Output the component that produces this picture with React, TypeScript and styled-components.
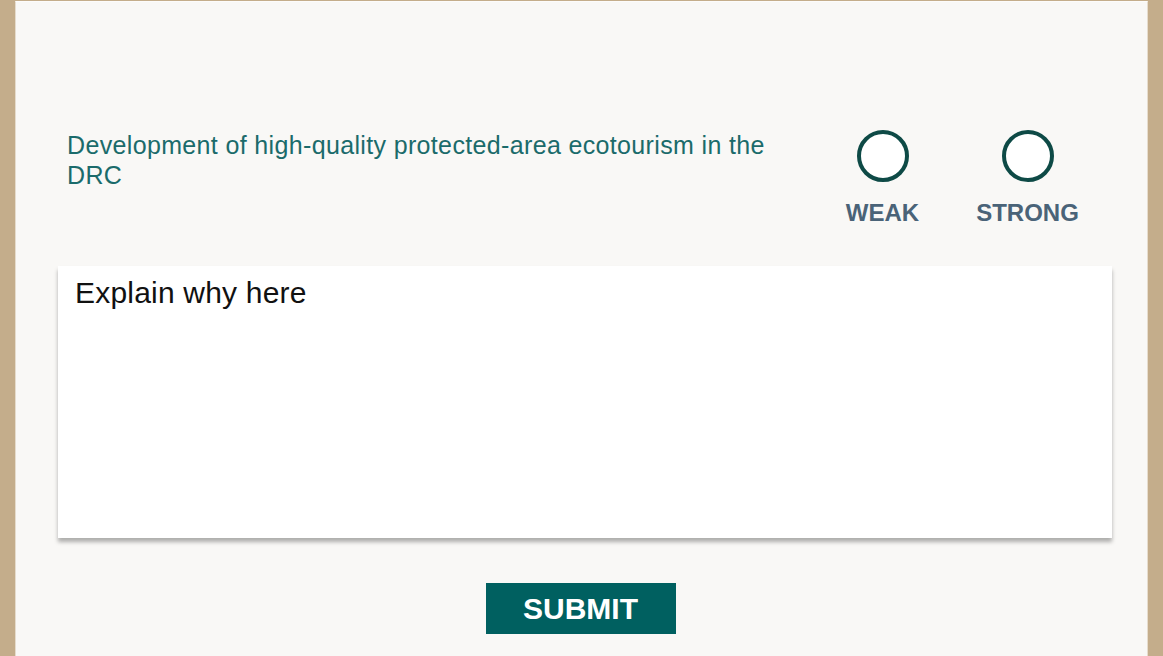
import React from "react";
import styled, { createGlobalStyle } from "styled-components";

const Global = createGlobalStyle`
  html, body { margin: 0; padding: 0; }
  body { font-family: "Liberation Sans", Arial, sans-serif; background: #c4ad8b; }
`;

const Frame = styled.div`
  width: 1163px;
  height: 656px;
  box-sizing: border-box;
  padding: 1px 15px 0 15px;
  background: #c4ad8b;
  display: flex;
`;

const Panel = styled.main`
  flex: 1;
  background: #f9f8f6;
  border-left: 1px solid #e6dccd;
  border-right: 1px solid #e6dccd;
  border-top: 1px solid #fdfcfb;
  padding: 128px 35px 0 42px;
  display: flex;
  flex-direction: column;
  box-sizing: border-box;
`;

const QuestionRow = styled.section`
  display: flex;
  align-items: flex-start;
  justify-content: space-between;
  padding-left: 9px;
  height: 136px;
`;

const Question = styled.h2`
  margin: 0;
  width: 720px;
  font-weight: 400;
  font-size: 25px;
  letter-spacing: 0.35px;
  line-height: 30px;
  color: #1b6b6b;
`;

const Choices = styled.div`
  display: flex;
  gap: 40px;
  margin-right: 32px;
`;

const Choice = styled.label`
  width: 105px;
  display: flex;
  flex-direction: column;
  align-items: center;
  gap: 18px;
  cursor: pointer;
`;

const Radio = styled.span`
  width: 52px;
  height: 52px;
  box-sizing: border-box;
  border-radius: 50%;
  border: 4px solid #0e4a46;
  background: #ffffff;
`;

const ChoiceLabel = styled.span`
  font-weight: 700;
  font-size: 24px;
  line-height: 26px;
  color: #4a6378;
`;

const Explain = styled.textarea`
  height: 272px;
  box-sizing: border-box;
  border: none;
  resize: none;
  background: #ffffff;
  padding: 10px 17px;
  font-family: "Liberation Sans", Arial, sans-serif;
  font-size: 30px;
  letter-spacing: 0.2px;
  color: #111;
  box-shadow: 0 4px 4px rgba(0, 0, 0, 0.3);
  outline: none;
  &::placeholder { color: #111; opacity: 1; }
`;

const ButtonRow = styled.div`
  display: flex;
  justify-content: center;
  margin-top: 45px;
`;

const Submit = styled.button`
  width: 190px;
  height: 51px;
  border: none;
  background: #006060;
  color: #ffffff;
  font-family: "Liberation Sans", Arial, sans-serif;
  font-weight: 700;
  font-size: 30px;
  padding: 0;
  margin-right: 9px;
  cursor: pointer;
`;

export default function App() {
  return (
    <>
      <Global />
      <Frame>
        <Panel>
          <QuestionRow>
            <Question>
              Development of high-quality protected-area ecotourism in the DRC
            </Question>
            <Choices>
              <Choice>
                <Radio />
                <ChoiceLabel>WEAK</ChoiceLabel>
              </Choice>
              <Choice>
                <Radio />
                <ChoiceLabel>STRONG</ChoiceLabel>
              </Choice>
            </Choices>
          </QuestionRow>
          <Explain placeholder="Explain why here" />
          <ButtonRow>
            <Submit>SUBMIT</Submit>
          </ButtonRow>
        </Panel>
      </Frame>
    </>
  );
}
